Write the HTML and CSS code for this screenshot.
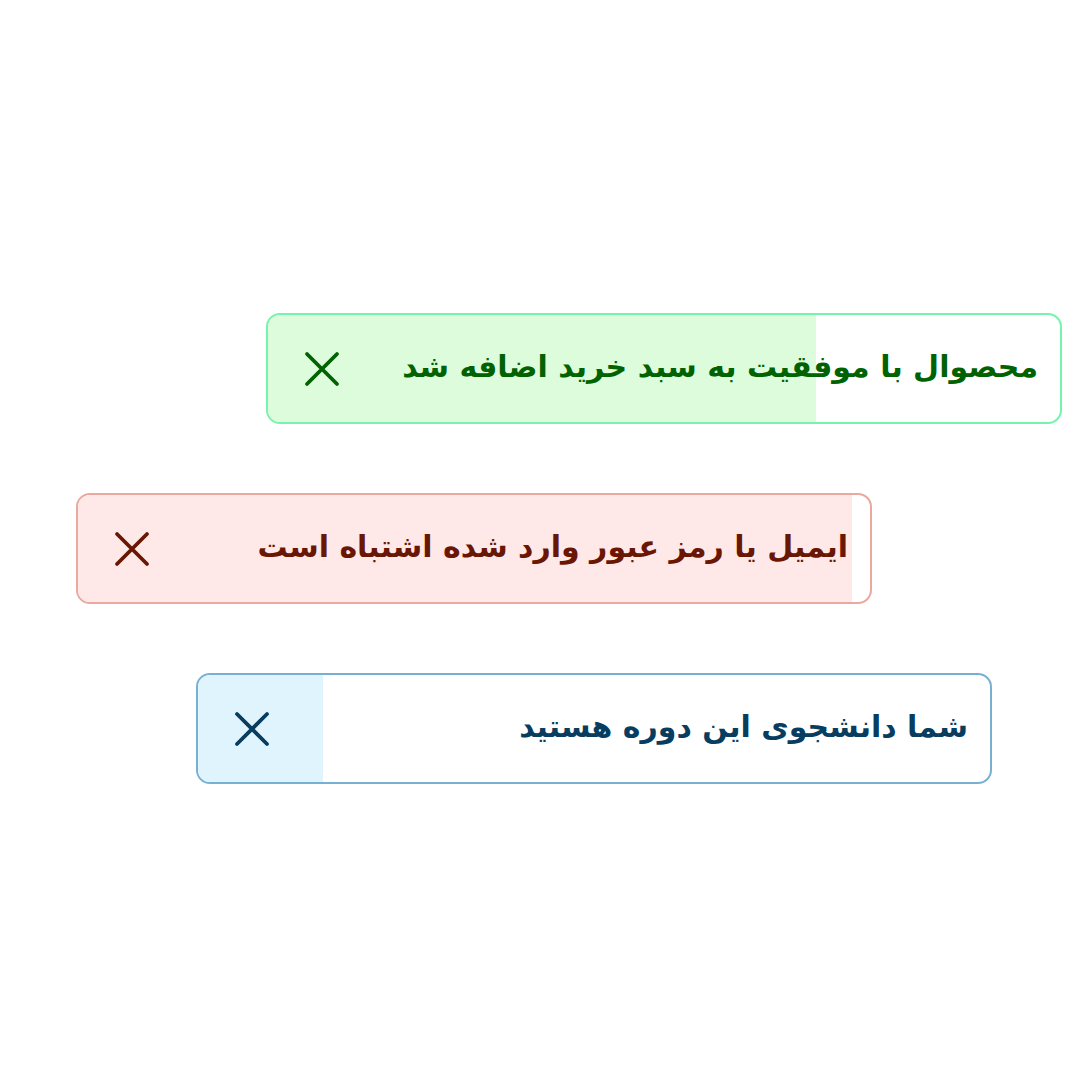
FILE: index.html
```html
<!DOCTYPE html>
<html lang="fa">
<head>
<meta charset="utf-8">
<link rel="stylesheet" href="styles.css">
</head>
<body>
<div class="stack">
  <div class="toast toast-success">
    <div class="progress" style="width: 69.2%"></div>
    <div class="content">
      <span class="message">محصوال با موفقیت به سبد خرید اضافه شد</span>
      <button class="close" aria-label="بستن">
        <svg viewBox="0 0 36 36" width="36" height="36"><path d="M3 3 L33 33 M33 3 L3 33" fill="none" stroke="currentColor" stroke-width="3.8" stroke-linecap="round"/></svg>
      </button>
    </div>
  </div>
  <div class="toast toast-error">
    <div class="progress" style="width: 97.7%"></div>
    <div class="content">
      <span class="message">ایمیل یا رمز عبور وارد شده اشتباه است</span>
      <button class="close" aria-label="بستن">
        <svg viewBox="0 0 36 36" width="36" height="36"><path d="M3 3 L33 33 M33 3 L3 33" fill="none" stroke="currentColor" stroke-width="3.8" stroke-linecap="round"/></svg>
      </button>
    </div>
  </div>
  <div class="toast toast-info">
    <div class="progress" style="width: 15.8%"></div>
    <div class="content">
      <span class="message">شما دانشجوی این دوره هستید</span>
      <button class="close" aria-label="بستن">
        <svg viewBox="0 0 36 36" width="36" height="36"><path d="M3 3 L33 33 M33 3 L3 33" fill="none" stroke="currentColor" stroke-width="3.8" stroke-linecap="round"/></svg>
      </button>
    </div>
  </div>
</div>
</body>
</html>
```
FILE: styles.css
```css
html, body {
  margin: 0;
  padding: 0;
  background: #ffffff;
}
body {
  width: 1080px;
  height: 1080px;
  font-family: "DejaVu Sans", sans-serif;
}
.stack {
  display: flex;
  flex-direction: column;
  align-items: flex-start;
  gap: 69px;
  padding-top: 313px;
}
.toast {
  position: relative;
  box-sizing: border-box;
  width: 796px;
  height: 111px;
  border: 2px solid;
  border-radius: 14px;
  background: #ffffff;
  overflow: hidden;
}
.toast-success { margin-left: 266px; border-color: #74f4ac; color: #006200; }
.toast-error { margin-left: 76px; border-color: #eaa99f; color: #6a1605; }
.toast-info { margin-left: 196px; border-color: #78b0d4; color: #083d60; }
.toast-success .progress { background: #dcfcdc; }
.toast-error .progress { background: #ffe9e8; }
.toast-info .progress { background: #e0f4fe; }
.progress {
  position: absolute;
  left: 0;
  top: 0;
  bottom: 0;
}
.content {
  position: relative;
  height: 100%;
  display: flex;
  flex-direction: row-reverse;
  align-items: center;
  justify-content: space-between;
  padding: 0 22px 0 36px;
}
.message {
  direction: rtl;
  font-size: 30px;
  font-weight: bold;
  line-height: 1;
  padding-bottom: 4px;
}
.close {
  display: flex;
  align-items: center;
  justify-content: center;
  width: 36px;
  height: 36px;
  padding: 0;
  border: 0;
  background: transparent;
  color: inherit;
}
.close svg {
  display: block;
}
```
